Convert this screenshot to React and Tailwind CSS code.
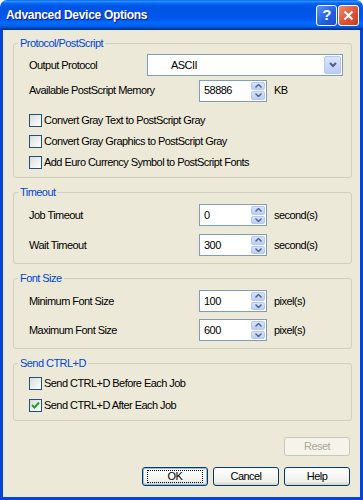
const Spin = ({ value }) => (
  <div className="flex h-[22px] w-[68px] items-stretch border border-[#7F9DB9] bg-white p-px">
    <span className="flex flex-1 items-center pl-[3px]">{value}</span>
    <div className="flex w-[14px] flex-col gap-px">
      <div className="flex flex-1 items-center justify-center rounded-[2px] border border-[#B5C7F2] bg-[linear-gradient(to_bottom,#D8E3FD,#BCCDF8)]">
        <svg width="7" height="4" viewBox="0 0 7 4">
          <path d="M0.5 3.5 L3.5 0.5 L6.5 3.5" stroke="#4D6185" strokeWidth="1.4" fill="none" />
        </svg>
      </div>
      <div className="flex flex-1 items-center justify-center rounded-[2px] border border-[#B5C7F2] bg-[linear-gradient(to_bottom,#D8E3FD,#BCCDF8)]">
        <svg width="7" height="4" viewBox="0 0 7 4">
          <path d="M0.5 0.5 L3.5 3.5 L6.5 0.5" stroke="#4D6185" strokeWidth="1.4" fill="none" />
        </svg>
      </div>
    </div>
  </div>
);

const Check = ({ label, checked, className = "" }) => (
  <div className={"flex items-center gap-[2px] " + className}>
    <div className="flex h-[13px] w-[13px] items-center justify-center border border-[#1C5180] bg-[linear-gradient(135deg,#DCDCD7,#FFFFFF)]">
      {checked && (
        <svg width="9" height="9" viewBox="0 0 9 9">
          <path d="M1 4 L3.5 6.5 L8 1.5" stroke="#21A121" strokeWidth="2" fill="none" />
        </svg>
      )}
    </div>
    <span>{label}</span>
  </div>
);

const Group = ({ title, className = "", children }) => (
  <fieldset className={"rounded-[3px] border border-[#D0D0BF] " + className}>
    <legend className="ml-[4px] px-[2px] leading-[13px] text-[#0046D5]">{title}</legend>
    {children}
  </fieldset>
);

const SpinRow = ({ label, value, unit, className = "" }) => (
  <div className={"flex h-[22px] items-center " + className}>
    <span className="w-[170px]">{label}</span>
    <Spin value={value} />
    <span className="ml-[7px]">{unit}</span>
  </div>
);

const XpButton = ({ children, isDefault }) => (
  <div
    className={
      "flex h-[19px] w-[66px] items-center justify-center rounded-[3px] border border-[#003C74] bg-[linear-gradient(to_bottom,#FFFFFF,#F0F0EA_80%,#D6D0C5)] " +
      (isDefault ? "shadow-[inset_0_0_0_1px_#9DB9EB]" : "")
    }
  >
    {isDefault ? (
      <span className="flex h-[13px] w-[56px] items-center justify-center border border-dotted border-[#000]">
        {children}
      </span>
    ) : (
      children
    )}
  </div>
);

export default function App() {
  return (
    <div className="flex h-[500px] w-[363px] flex-col font-['Liberation_Sans',Arial,sans-serif] text-[11px] tracking-[-0.55px] text-black">
      {/* title bar */}
      <div className="flex h-[30px] items-center justify-between rounded-t-[7px] bg-[linear-gradient(to_bottom,#0058EE_0%,#3593FF_4%,#288EFF_6%,#127DFF_8%,#036FFC_10%,#0262EE_14%,#0057E5_20%,#0054E3_24%,#0055EB_56%,#005BF5_66%,#026AFE_76%,#0062EF_86%,#0052D6_92%,#0040AB_94%,#003092_100%)] pl-[6px] pr-[4px]">
        <span className="text-[12px] font-bold tracking-[-0.3px] text-white [text-shadow:1px_1px_#0A1883]">
          Advanced Device Options
        </span>
        <div className="flex gap-[1px]">
          <div className="flex h-[21px] w-[21px] items-center justify-center rounded-[3px] border border-white bg-[linear-gradient(135deg,#5A93F8,#1E5EE4_60%,#1B4FCB)] text-[15px] font-bold text-white">
            ?
          </div>
          <div className="flex h-[21px] w-[21px] items-center justify-center rounded-[3px] border border-white bg-[linear-gradient(135deg,#F08E6F,#E0532F_55%,#C23F1C)]">
            <svg width="11" height="11" viewBox="0 0 11 11">
              <path d="M1.5 1.5 L9.5 9.5 M9.5 1.5 L1.5 9.5" stroke="white" strokeWidth="2.2" />
            </svg>
          </div>
        </div>
      </div>

      {/* client area */}
      <div className="flex flex-1 flex-col border-x-[3px] border-b-[3px] border-[#0843D8] bg-[#ECE9D8] pl-[10px] pr-[8px] pt-[7px]">
        <Group title="Protocol/PostScript">
          <div className="pb-[4px] pl-[15px] pr-[8px] pt-[4px]">
            <div className="flex h-[22px] items-center">
              <span className="w-[118px]">Output Protocol</span>
              <div className="flex h-full flex-1 items-stretch border border-[#7F9DB9] bg-white p-px">
                <span className="flex flex-1 items-center pl-[22px]">ASCII</span>
                <div className="flex w-[17px] items-center justify-center rounded-[2px] border border-[#B5C7F2] bg-[linear-gradient(to_bottom,#DCE6FD,#B9CBF8)]">
                  <svg width="8" height="6" viewBox="0 0 8 6">
                    <path d="M1 1 L4 4 L7 1" stroke="#4D6185" strokeWidth="2" fill="none" />
                  </svg>
                </div>
              </div>
            </div>
            <SpinRow label="Available PostScript Memory" value="58886" unit="KB" className="mt-[3px] h-[23px]" />
            <Check label="Convert Gray Text to PostScript Gray" className="mt-[8px] h-[21px]" />
            <Check label="Convert Gray Graphics to PostScript Gray" className="h-[21px]" />
            <Check label="Add Euro Currency Symbol to PostScript Fonts" className="h-[21px]" />
          </div>
        </Group>

        <Group title="Timeout" className="mt-[8px]">
          <div className="pb-[7px] pl-[15px] pr-[8px] pt-[5px]">
            <SpinRow label="Job Timeout" value="0" unit="second(s)" />
            <SpinRow label="Wait Timeout" value="300" unit="second(s)" className="mt-[8px]" />
          </div>
        </Group>

        <Group title="Font Size" className="mt-[8px]">
          <div className="pb-[7px] pl-[15px] pr-[8px] pt-[5px]">
            <SpinRow label="Minimum Font Size" value="100" unit="pixel(s)" />
            <SpinRow label="Maximum Font Size" value="600" unit="pixel(s)" className="mt-[7px]" />
          </div>
        </Group>

        <Group title="Send CTRL+D" className="mt-[8px]">
          <div className="pb-[4px] pl-[15px] pr-[8px] pt-[2px]">
            <Check label="Send CTRL+D Before Each Job" className="h-[22px]" />
            <Check label="Send CTRL+D After Each Job" checked className="h-[22px]" />
          </div>
        </Group>

        <div className="mr-[2px] mt-[16px] flex justify-end">
          <div className="flex h-[19px] w-[66px] items-center justify-center rounded-[3px] border border-[#C9C7BA] bg-[#F5F4EA] text-[#ACA899]">
            Reset
          </div>
        </div>

        <div className="mr-[2px] mt-[11px] flex justify-end gap-[5px]">
          <XpButton isDefault>OK</XpButton>
          <XpButton>Cancel</XpButton>
          <XpButton>Help</XpButton>
        </div>
      </div>
    </div>
  );
}
